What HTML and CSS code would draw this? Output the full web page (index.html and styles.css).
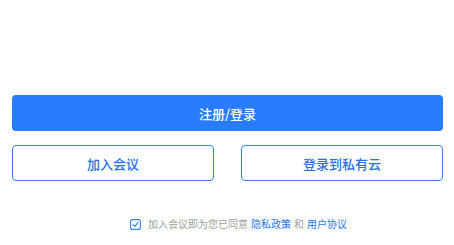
FILE: index.html
```html
<!DOCTYPE html>
<html lang="zh-CN">
<head>
<meta charset="utf-8">
<title>登录</title>
<link rel="stylesheet" href="styles.css">
</head>
<body>
<main class="page">
  <button class="btn btn-primary" type="button">注册/登录</button>
  <div class="row">
    <button class="btn btn-outline" type="button">加入会议</button>
    <button class="btn btn-outline" type="button">登录到私有云</button>
  </div>
  <div class="agree">
    <span class="check">
      <svg width="11" height="11" viewBox="0 0 11 11" aria-hidden="true">
        <rect x="0.6" y="0.6" width="9.8" height="9.8" rx="2" fill="none" stroke="#3d80f0" stroke-width="1.1"/>
        <path d="M3 5.6 L4.8 7.3 L8 3.6" fill="none" stroke="#3d80f0" stroke-width="1.2" stroke-linecap="round" stroke-linejoin="round"/>
      </svg>
    </span>
    <span class="agree-text">加入会议即为您已同意<a class="link" href="#">隐私政策</a>和<a class="link" href="#">用户协议</a></span>
  </div>
</main>
</body>
</html>
```

FILE: styles.css
```css
html, body {
  margin: 0;
  padding: 0;
  background: #ffffff;
}
body {
  font-family: "Noto Sans CJK SC", "Noto Sans", sans-serif;
}
.page {
  width: 454px;
  height: 245px;
  box-sizing: border-box;
  padding: 95px 11px 0 12px;
  display: flex;
  flex-direction: column;
}
.btn {
  font-family: inherit;
  font-size: 13px;
  font-weight: 500;
  height: 36px;
  border-radius: 4px;
  box-sizing: border-box;
  cursor: pointer;
  padding: 0;
  line-height: 1;
}
.btn-primary {
  width: 100%;
  background: #2a7cfe;
  border: none;
  color: #ffffff;
}
.row {
  margin-top: 14px;
  display: grid;
  grid-template-columns: 202px 202px;
  justify-content: space-between;
}
.btn-outline {
  background: #ffffff;
  border: 1px solid #3a7de6;
  color: #2a6fe0;
}
.agree {
  margin-top: 37px;
  display: flex;
  align-items: center;
  justify-content: center;
  gap: 7px;
  padding-left: 25px;
}
.check {
  display: flex;
  width: 11px;
  height: 11px;
}
.agree-text {
  font-size: 10px;
  color: #a0a0a0;
  line-height: 12px;
}
.link {
  color: #2a74e6;
  text-decoration: none;
  margin: 0 3px;
}
```
